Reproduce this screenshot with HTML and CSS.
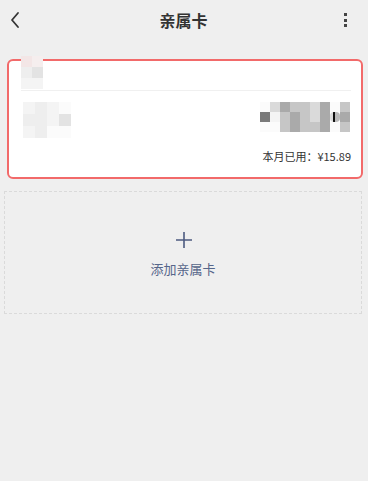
FILE: index.html
```html
<!DOCTYPE html>
<html lang="zh">
<head>
<meta charset="utf-8">
<link rel="stylesheet" href="styles.css">
</head>
<body>
<div class="header">
  <svg class="back" width="12" height="18" viewBox="0 0 12 18"><path d="M9 2 L3 9 L9 16" fill="none" stroke="#333" stroke-width="1.8" stroke-linecap="round" stroke-linejoin="round"/></svg>
  <div class="title">亲属卡</div>
  <div class="more"><span></span><span></span><span></span></div>
</div>
<div class="card">
  <div class="card-top">
    <div class="mosaic m-top">
      <i class="p1"></i><i class="p2"></i>
      <i class="w2"></i><i class="w3"></i>
      <i class="w1"></i><i class="w1"></i>
    </div>
  </div>
  <div class="card-body">
    <div class="row">
      <div class="mosaic m-left">
        <i class="w1"></i><i class="w2"></i><i class="w1"></i><i class="w0"></i>
        <i class="w2"></i><i class="w2"></i><i class="w1"></i><i class="w3"></i>
        <i class="w1"></i><i class="w2"></i><i class="w0"></i><i class="w0"></i>
      </div>
      <div class="mosaic m-right">
        <i class="w0"></i><i class="g3"></i><i class="g1"></i><i class="g2"></i><i class="g2"></i><i class="g3"></i><i class="g1"></i><i class="w0"></i><i class="g2"></i>
        <i class="g5"></i><i class="w1"></i><i class="g2"></i><i class="g1"></i><i class="g2"></i><i class="g3"></i><i class="g1"></i><i class="k"></i><i class="g1"></i>
        <i class="w0"></i><i class="w0"></i><i class="g2"></i><i class="g1"></i><i class="g2"></i><i class="g2"></i><i class="g1"></i><i class="w0"></i><i class="g2"></i>
      </div>
    </div>
    <div class="used">本月已用：¥15.89</div>
  </div>
</div>
<div class="add">
  <svg class="plus" width="18" height="18" viewBox="0 0 18 18"><path d="M9 1 V17 M1 9 H17" stroke="#4d5b80" stroke-width="1.6"/></svg>
  <div class="add-text">添加亲属卡</div>
</div>
</body>
</html>
```
FILE: styles.css
```css
* { box-sizing: border-box; }
body {
  margin: 0;
  background: #efefef;
  font-family: "Noto Sans CJK SC", "Noto Sans", sans-serif;
  color: #333;
  width: 368px;
  height: 481px;
  overflow: hidden;
}
.header {
  height: 40px;
  display: flex;
  align-items: center;
  justify-content: space-between;
  padding: 0 21px 0 9px;
}
.back { display: block; }
.title {
  font-size: 16px;
  font-weight: 700;
  color: #333;
  margin-left: 2px;
}
.more {
  display: flex;
  flex-direction: column;
  gap: 2.5px;
}
.more span {
  width: 3px;
  height: 3px;
  background: #444;
  display: block;
}
.card {
  margin: 19px 5px 0 7px;
  height: 120px;
  background: #fff;
  border: 2px solid #f26a6a;
  border-radius: 6px;
  position: relative;
}
.card-top {
  height: 30px;
  margin: 0 10px 0 12px;
  border-bottom: 1px solid #f0f0f0;
  position: relative;
}
.mosaic { display: grid; }
.mosaic i { display: block; }
.m-top {
  position: absolute;
  left: 0;
  top: -5px;
  grid-template-columns: repeat(2, 11px);
  grid-template-rows: repeat(3, 11px);
}
.card-body {
  padding: 11px 10px 0 14px;
}
.row {
  display: flex;
  justify-content: space-between;
  align-items: flex-start;
}
.m-left {
  grid-template-columns: repeat(4, 12px);
  grid-template-rows: repeat(3, 12px);
}
.m-right {
  grid-template-columns: repeat(9, 10px);
  grid-template-rows: repeat(3, 10px);
  margin-right: 1px;
}
.w0 { background: #fbfbfb; }
.w1 { background: #f4f4f4; }
.w2 { background: #eeeeee; }
.w3 { background: #e3e3e3; }
.p1 { background: #f3e6e6; }
.p2 { background: #f5eeee; }
.g1 { background: #aaaaaa; }
.g2 { background: #c6c6c6; }
.g3 { background: #dadada; }
.g5 { background: #7a7a7a; }
.k { background: linear-gradient(90deg, #ddd 0 30%, #111 30% 55%, #bbb 55%); border-radius: 40%; }
.used {
  text-align: right;
  font-size: 11px;
  color: #333;
  margin-top: 10px;
  line-height: 16px;
}
.add {
  margin: 12px 6px 0 4px;
  height: 123px;
  border: 1px dashed #dadada;
  display: flex;
  flex-direction: column;
  align-items: center;
  padding-top: 39px;
}
.plus { display: block; margin-left: 2px; }
.add-text {
  margin-top: 11px;
  font-size: 13px;
  color: #56668a;
  line-height: 18px;
}
```
